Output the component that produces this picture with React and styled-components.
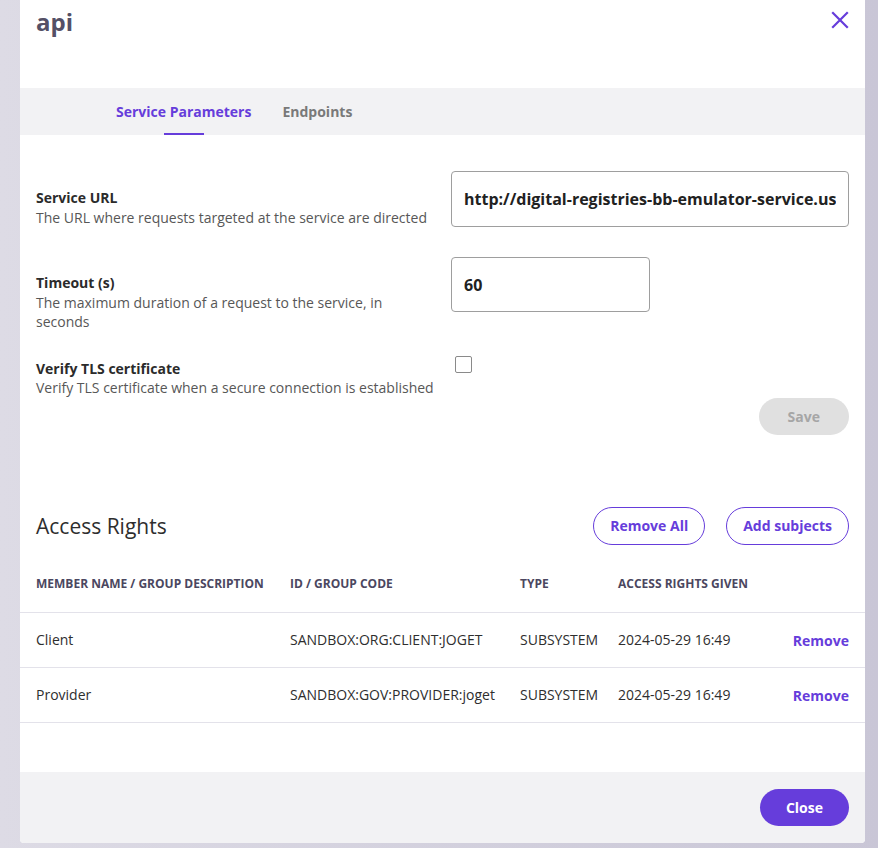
import React, { useState } from 'react';
import styled, { createGlobalStyle } from 'styled-components';

const GlobalStyle = createGlobalStyle`
  html, body {
    margin: 0;
    padding: 0;
  }
  body {
    height: 848px;
    overflow: hidden;
    background: linear-gradient(to right, #dddbe5, #c9c6d6);
    font-family: 'Open Sans', 'Liberation Sans', sans-serif;
  }
`;

const purple = '#663ddb';

const Page = styled.div`
  height: 848px;
  padding-left: 20px;
  box-sizing: border-box;
`;

const Modal = styled.div`
  width: 845px;
  height: 843px;
  background: white;
  border-radius: 0 0 4px 4px;
  display: flex;
  flex-direction: column;
  overflow: hidden;
`;

const Header = styled.div`
  height: 88px;
  box-sizing: border-box;
  padding: 6px 16px 0 16px;
  display: flex;
  justify-content: space-between;
  align-items: flex-start;
`;

const Title = styled.h1`
  margin: 0;
  font-size: 24px;
  line-height: 32px;
  font-weight: 700;
  color: #545066;
`;

const CloseIcon = styled.button`
  border: none;
  background: none;
  padding: 0;
  margin-top: 5px;
  width: 18px;
  height: 18px;
  cursor: pointer;
  display: flex;
`;

const TabBar = styled.div`
  height: 47px;
  background: #f2f2f4;
  display: flex;
  padding-left: 96px;
  gap: 31px;
`;

const Tab = styled.div`
  position: relative;
  display: flex;
  align-items: center;
  font-size: 14px;
  font-weight: 700;
  color: ${p => (p.$active ? purple : '#797979')};
  cursor: pointer;
  &::after {
    content: '';
    display: ${p => (p.$active ? 'block' : 'none')};
    position: absolute;
    bottom: 0;
    left: 50%;
    width: 40px;
    margin-left: -20px;
    height: 2px;
    background: ${purple};
  }
`;

const Content = styled.div`
  flex: 1;
  display: flex;
  flex-direction: column;
`;

const Form = styled.div`
  padding: 36px 16px 0 16px;
  display: flex;
  flex-direction: column;
`;

const FieldRow = styled.div`
  display: grid;
  grid-template-columns: 1fr 398px;
  column-gap: 16px;
  align-items: start;
  margin-bottom: ${p => p.$mb}px;
`;

const FieldLabel = styled.div`
  padding-top: ${p => p.$pt}px;
  font-size: 14px;
  line-height: 19.5px;
  color: #575757;
`;

const FieldTitle = styled.div`
  font-weight: 700;
  color: #2b2b2b;
`;

const TextInput = styled.input`
  box-sizing: border-box;
  width: ${p => p.$w}px;
  height: ${p => p.$h}px;
  border: 1px solid #9e9e9e;
  border-radius: 4px;
  padding: 0 12px;
  font-family: 'Open Sans', 'Liberation Sans', sans-serif;
  font-size: 16px;
  font-weight: 700;
  color: #212121;
  outline: none;
`;

const Checkbox = styled.span`
  display: block;
  margin: 13px 0 0 4px;
  width: 15px;
  height: 15px;
  border: 1.5px solid #8a8a8a;
  border-radius: 2px;
`;

const ActionRow = styled.div`
  display: flex;
  justify-content: flex-end;
`;

const PillButton = styled.button`
  height: ${p => p.$h || 38}px;
  padding: 0 ${p => p.$px || 18}px;
  border-radius: 20px;
  font-family: 'Open Sans', 'Liberation Sans', sans-serif;
  font-size: 14px;
  font-weight: 700;
  cursor: pointer;
  border: ${p => (p.$variant === 'outline' ? `1px solid ${purple}` : 'none')};
  background: ${p =>
    p.$variant === 'outline' ? 'white' : p.$variant === 'disabled' ? '#e0e0e0' : purple};
  color: ${p =>
    p.$variant === 'outline' ? purple : p.$variant === 'disabled' ? '#a6a6a6' : 'white'};
`;

const RightsHeader = styled.div`
  margin-top: 72px;
  padding: 0 16px;
  display: flex;
  align-items: center;
  justify-content: space-between;
`;

const SectionTitle = styled.h2`
  margin: 0;
  font-size: 21px;
  font-weight: 400;
  color: #2e2e2e;
`;

const ButtonGroup = styled.div`
  display: flex;
  gap: 21px;
`;

const Table = styled.div`
  margin-top: 10px;
  display: flex;
  flex-direction: column;
`;

const TRow = styled.div`
  display: grid;
  grid-template-columns: 254px 230px 98px 1fr 90px;
  align-items: center;
  height: ${p => p.$h}px;
  border-bottom: 1px solid #e3e2ea;
  box-sizing: border-box;
`;

const Cell = styled.div`
  padding-left: 16px;
  font-size: ${p => (p.$head ? 12 : 14)}px;
  font-weight: ${p => (p.$head ? 700 : 400)};
  text-transform: ${p => (p.$head ? 'uppercase' : 'none')};
  color: ${p => (p.$head ? '#4b4760' : '#2e2e2e')};
  white-space: nowrap;
`;

const RemoveLink = styled.div`
  padding-right: 16px;
  text-align: right;
  font-size: 14px;
  font-weight: 700;
  color: ${purple};
  cursor: pointer;
  padding-top: 2px;
`;

const Footer = styled.div`
  height: 71px;
  background: #f2f2f4;
  display: flex;
  justify-content: flex-end;
  align-items: flex-start;
  padding: 17px 16px 0 0;
  box-sizing: border-box;
`;

const rows = [
  { name: 'Client', code: 'SANDBOX:ORG:CLIENT:JOGET', type: 'SUBSYSTEM', given: '2024-05-29 16:49' },
  { name: 'Provider', code: 'SANDBOX:GOV:PROVIDER:joget', type: 'SUBSYSTEM', given: '2024-05-29 16:49' },
];

const App = () => {
  const [tab, setTab] = useState('params');

  return (
    <Page>
      <GlobalStyle />
      <Modal>
        <Header>
          <Title>api</Title>
          <CloseIcon aria-label="close">
            <svg width="18" height="18" viewBox="0 0 18 18">
              <path d="M2 2 L16 16 M16 2 L2 16" stroke={purple} strokeWidth="2.2" strokeLinecap="square" />
            </svg>
          </CloseIcon>
        </Header>
        <TabBar>
          <Tab $active={tab === 'params'} onClick={() => setTab('params')}>Service Parameters</Tab>
          <Tab $active={tab === 'endpoints'} onClick={() => setTab('endpoints')}>Endpoints</Tab>
        </TabBar>
        <Content>
          <Form>
            <FieldRow $mb={30}>
              <FieldLabel $pt={17}>
                <FieldTitle>Service URL</FieldTitle>
                The URL where requests targeted at the service are directed
              </FieldLabel>
              <TextInput $w={398} $h={56} readOnly value="http://digital-registries-bb-emulator-service.usct-dev.svc.cluster.local:8080" />
            </FieldRow>
            <FieldRow $mb={11}>
              <FieldLabel $pt={16}>
                <FieldTitle>Timeout (s)</FieldTitle>
                The maximum duration of a request to the service, in seconds
              </FieldLabel>
              <TextInput $w={199} $h={55} readOnly value="60" />
            </FieldRow>
            <FieldRow $mb={0}>
              <FieldLabel $pt={16}>
                <FieldTitle>Verify TLS certificate</FieldTitle>
                Verify TLS certificate when a secure connection is established
              </FieldLabel>
              <Checkbox />
            </FieldRow>
            <ActionRow>
              <PillButton $variant="disabled" $h={37} $px={29}>Save</PillButton>
            </ActionRow>
          </Form>

          <RightsHeader>
            <SectionTitle>Access Rights</SectionTitle>
            <ButtonGroup>
              <PillButton $variant="outline" $px={16}>Remove All</PillButton>
              <PillButton $variant="outline" $px={16}>Add subjects</PillButton>
            </ButtonGroup>
          </RightsHeader>

          <Table>
            <TRow $h={58}>
              <Cell $head>Member name / Group description</Cell>
              <Cell $head>ID / Group code</Cell>
              <Cell $head>Type</Cell>
              <Cell $head>Access rights given</Cell>
              <div />
            </TRow>
            {rows.map(r => (
              <TRow key={r.name} $h={55}>
                <Cell>{r.name}</Cell>
                <Cell>{r.code}</Cell>
                <Cell>{r.type}</Cell>
                <Cell>{r.given}</Cell>
                <RemoveLink>Remove</RemoveLink>
              </TRow>
            ))}
          </Table>
        </Content>
        <Footer>
          <PillButton $h={37} $px={26}>Close</PillButton>
        </Footer>
      </Modal>
    </Page>
  );
};

export default App;
